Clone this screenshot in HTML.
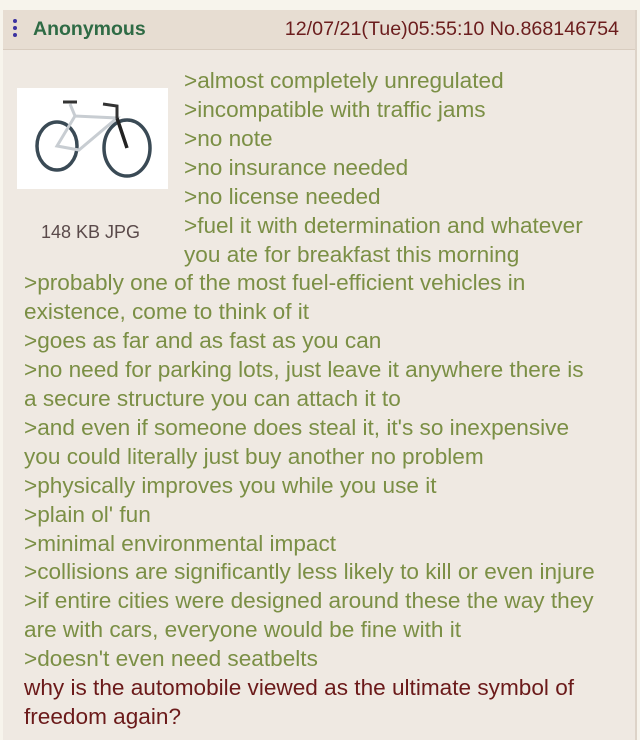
<!DOCTYPE html>
<html><head><style>
body{margin:0;width:640px;height:734px;background:#f7f4ec;font-family:"Liberation Sans",sans-serif;overflow:hidden;position:relative}
.box{position:absolute;left:3px;top:10px;width:632px;height:730px;background:#efe9e2;border-right:2px solid #ddd3c8}
.hdr{position:absolute;left:0;top:0;width:632px;height:39px;background:#e7ddd2;border-bottom:1px solid #d8ccbf}
.name{position:absolute;left:30px;top:8px;font-size:19.5px;font-weight:bold;color:#2f6b45}
.dots{position:absolute;left:10px;top:9px;width:4px}
.dots i{display:block;width:4px;height:4px;background:#3b32a0;border-radius:2px;margin-bottom:3px}
.date{position:absolute;right:16px;top:8px;font-size:19.7px;color:#6b1d1d}
.img{position:absolute;left:14px;top:78px;width:151px;height:101px;background:#fff}
.size{position:absolute;left:38px;top:212px;font-size:18px;color:#5a4a4a}
.l{position:absolute;font-size:22.6px;color:#7b8f45;white-space:nowrap;line-height:29px}
.r{color:#6b1a1a}
</style></head><body>
<div class="box">
<div class="hdr"><div class="dots"><i></i><i></i><i></i></div><div class="name">Anonymous</div><div class="date">12/07/21(Tue)05:55:10 No.868146754</div></div>
<div class="img"><svg width="151" height="101" viewBox="0 0 151 101">
<g fill="none" stroke="#3a4a55" stroke-width="3.5"><ellipse cx="40" cy="58" rx="20" ry="24"/><ellipse cx="110" cy="60" rx="23" ry="28"/></g>
<g fill="none" stroke="#c8cdd2" stroke-width="3"><path d="M40 58 L62 62 L100 30 L58 28 Z M58 28 L53 16"/></g>
<path d="M100 30 L110 60" stroke="#222" stroke-width="3.5"/>
<path d="M46 14 L60 14 M86 16 L100 18 L100 30" stroke="#333" stroke-width="3" fill="none"/>
</svg></div>
<div class="size">148 KB JPG</div>
</div>
<div class="l" style="left:184px;top:66px">&gt;almost completely unregulated</div>
<div class="l" style="left:184px;top:95px">&gt;incompatible with traffic jams</div>
<div class="l" style="left:184px;top:124px">&gt;no note</div>
<div class="l" style="left:184px;top:153px">&gt;no insurance needed</div>
<div class="l" style="left:184px;top:182px">&gt;no license needed</div>
<div class="l" style="left:184px;top:211px">&gt;fuel it with determination and whatever</div>
<div class="l" style="left:184px;top:240px">you ate for breakfast this morning</div>
<div class="l" style="left:24px;top:268px">&gt;probably one of the most fuel-efficient vehicles in</div>
<div class="l" style="left:24px;top:297px">existence, come to think of it</div>
<div class="l" style="left:24px;top:326px">&gt;goes as far and as fast as you can</div>
<div class="l" style="left:24px;top:355px">&gt;no need for parking lots, just leave it anywhere there is</div>
<div class="l" style="left:24px;top:384px">a secure structure you can attach it to</div>
<div class="l" style="left:24px;top:413px">&gt;and even if someone does steal it, it's so inexpensive</div>
<div class="l" style="left:24px;top:442px">you could literally just buy another no problem</div>
<div class="l" style="left:24px;top:471px">&gt;physically improves you while you use it</div>
<div class="l" style="left:24px;top:500px">&gt;plain ol' fun</div>
<div class="l" style="left:24px;top:529px">&gt;minimal environmental impact</div>
<div class="l" style="left:24px;top:557px">&gt;collisions are significantly less likely to kill or even injure</div>
<div class="l" style="left:24px;top:586px">&gt;if entire cities were designed around these the way they</div>
<div class="l" style="left:24px;top:615px">are with cars, everyone would be fine with it</div>
<div class="l" style="left:24px;top:644px">&gt;doesn't even need seatbelts</div>
<div class="l r" style="left:24px;top:673px">why is the automobile viewed as the ultimate symbol of</div>
<div class="l r" style="left:24px;top:702px">freedom again?</div>
</body></html>
